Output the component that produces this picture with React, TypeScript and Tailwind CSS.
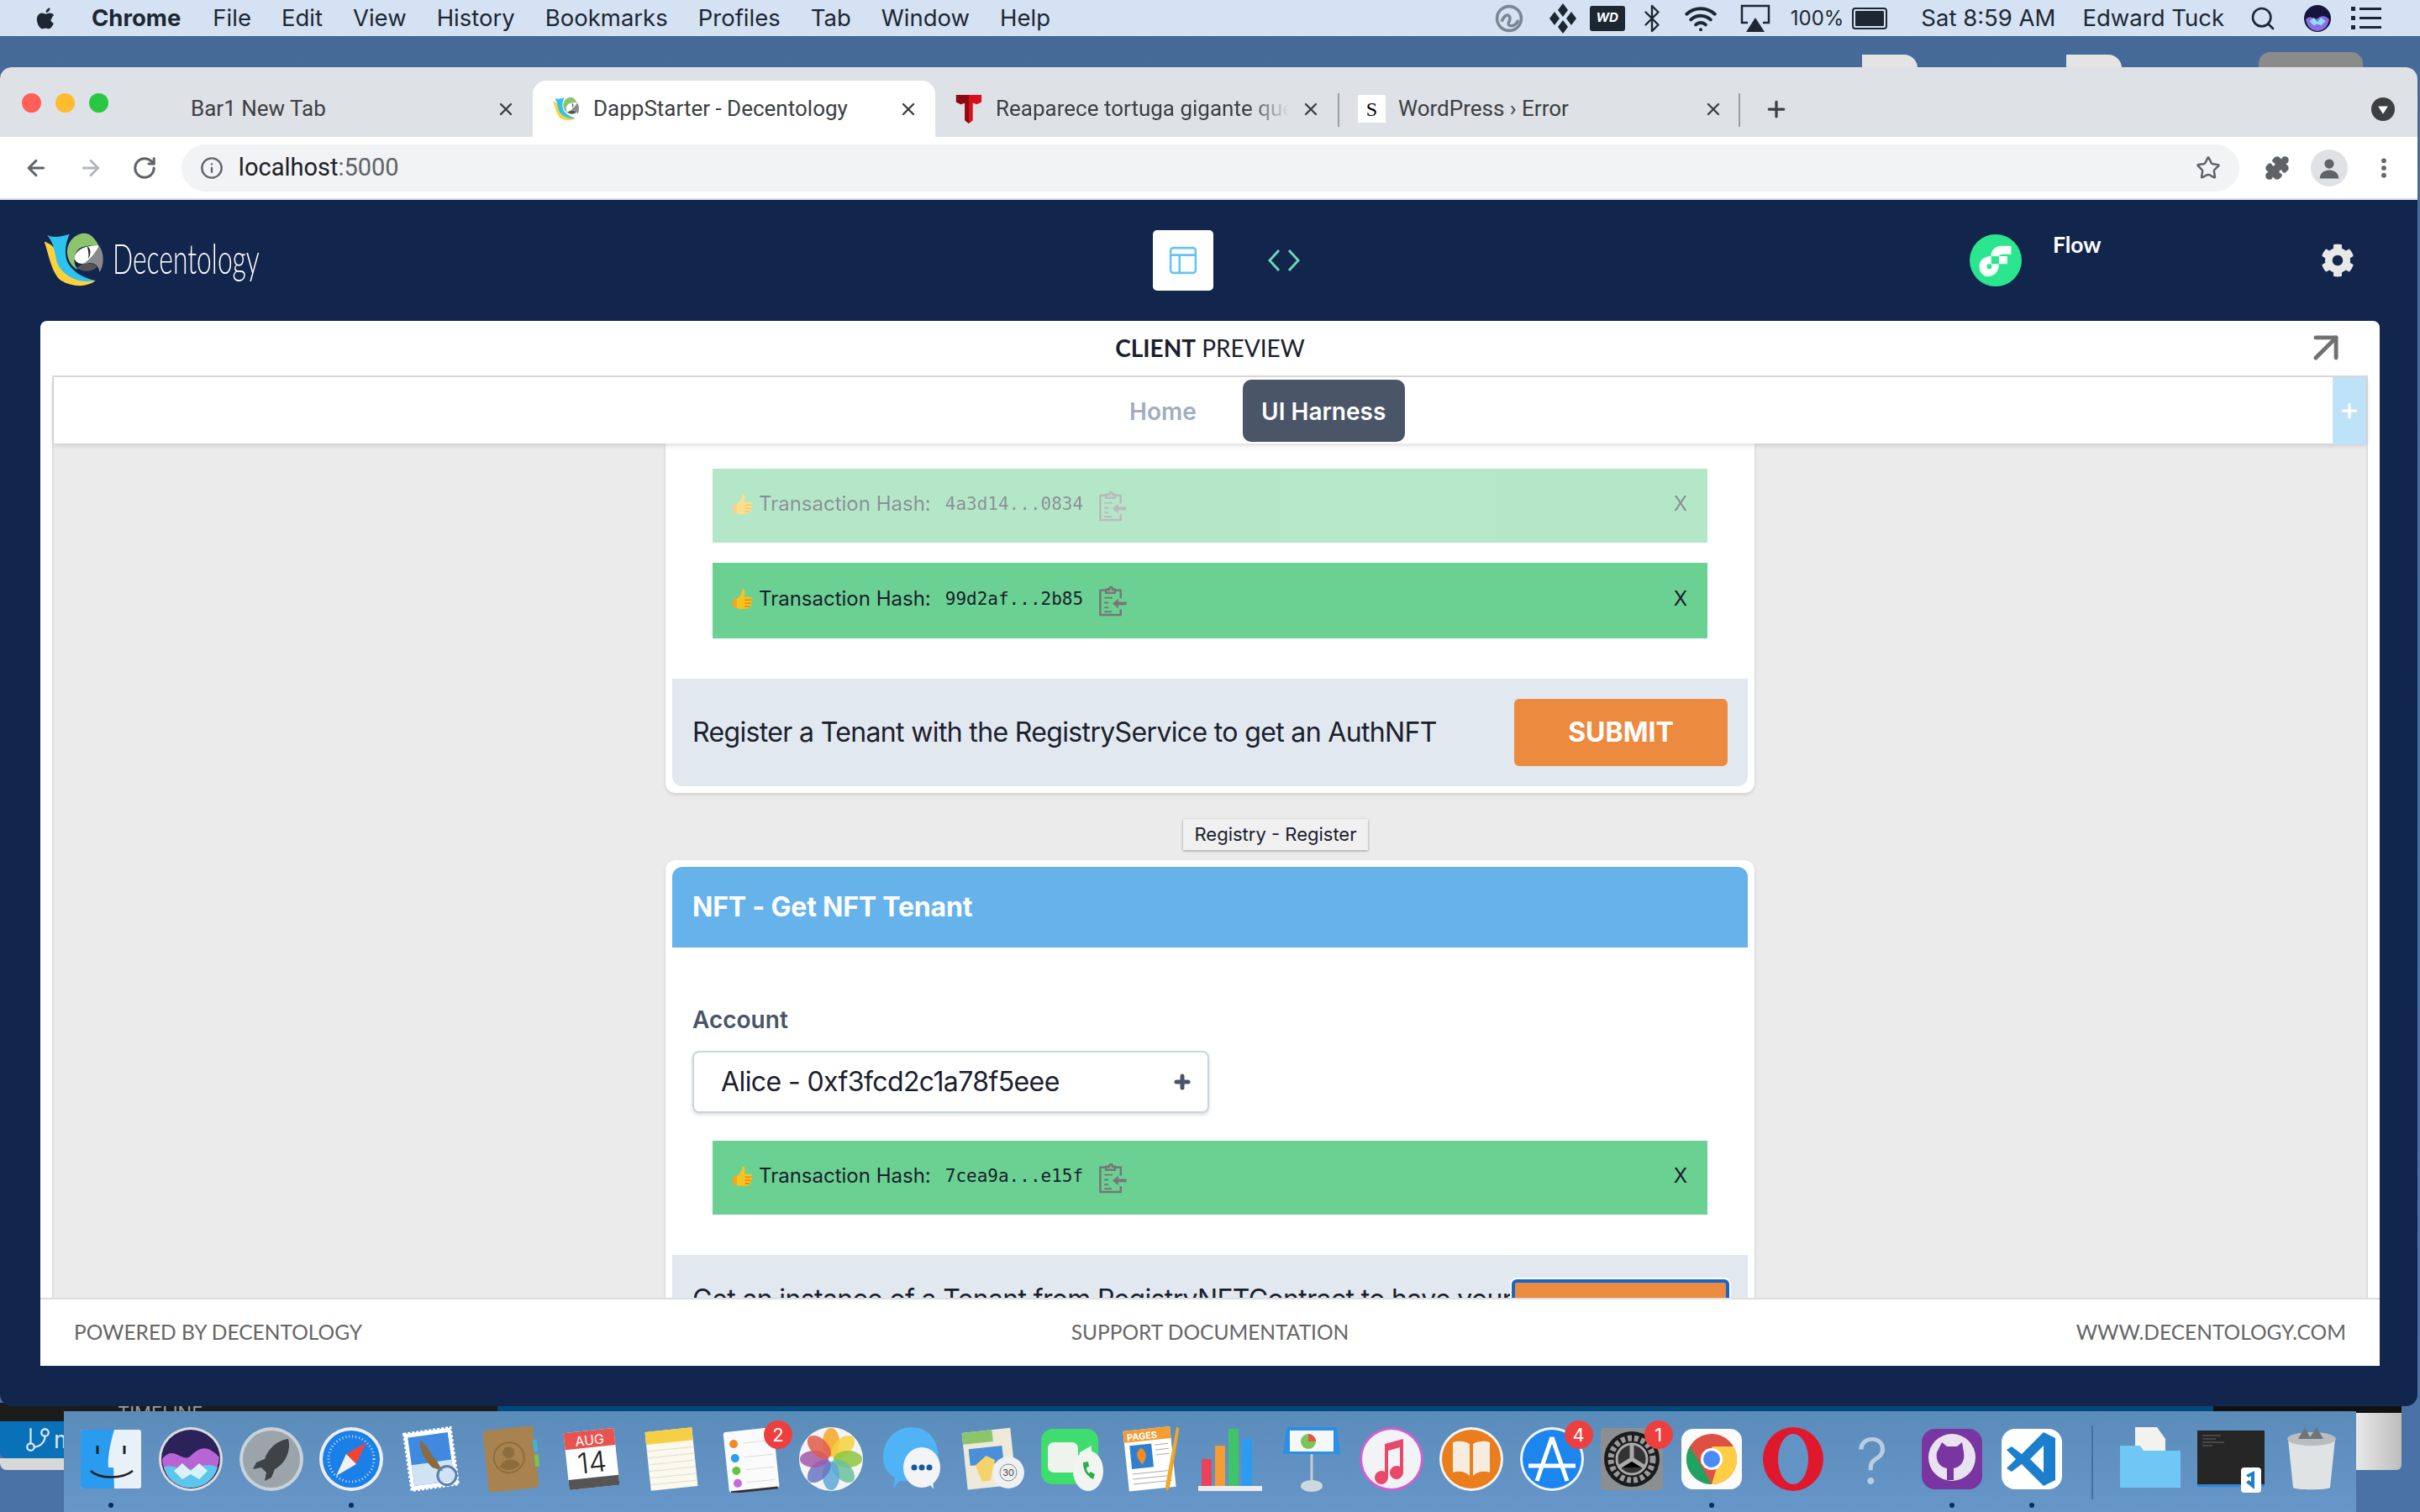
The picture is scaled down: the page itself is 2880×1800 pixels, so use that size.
import { ArrowUpRight, ArrowLeft, ArrowRight, RotateCw, Info, Star, Puzzle, MoreVertical, Plus, X, Search, Bluetooth, Wifi, GitBranch } from "lucide-react";
import { FaCog } from "react-icons/fa";
import type { ReactNode } from "react";

const leftMenu = ["File", "Edit", "View", "History", "Bookmarks", "Profiles", "Tab", "Window", "Help"];

const Parrot = ({ className }: { className: string }) => (
	<svg viewBox="66 50 224 202" className={className}>
		<path d="M68 82C90 90 108 100 112 130C120 180 170 225 255 225C225 250 170 250 130 225C95 200 85 130 68 82Z" fill="#fdd13a" />
		<path d="M78 58C100 70 130 65 160 55C150 80 140 110 150 150C165 190 210 215 255 225C200 235 140 215 115 160C105 115 100 80 78 58Z" fill="#2cc3f0" />
		<path d="M215 52C180 52 150 85 152 125C155 155 170 175 190 185C170 160 175 120 200 105C225 95 250 95 268 100C255 70 235 52 215 52Z" fill="#8fc46f" />
		<path d="M178 145C180 115 215 95 268 97C260 125 245 140 230 155C215 165 190 170 178 145Z" fill="#fff" />
		<path d="M225 100C237 105 242 125 228 145C233 125 228 115 225 100Z" fill="#222" />
		<path d="M268 97C285 120 290 160 270 195C268 175 260 165 240 160C215 160 200 175 185 178C215 165 250 135 268 97Z" fill="#8a8a8a" />
		<path d="M185 178C205 165 240 150 262 175C240 195 210 195 185 178Z" fill="#555" />
	</svg>
);

const Thumb = () => (
	<svg viewBox="1 1 22 22" className="h-[26px] w-[26px] shrink-0">
		<path d="M2 12h4v9H2z" fill="#f5a623" />
		<path d="M6 12c3-2 5-5 5.500-10 2.500 0 3.500 3 2 8h6c2 0 2 3 1 3.500 1 .5 1 3-.5 3.500.5 1 0 3-1.500 3.200 0 1-1 1.800-2 1.800H10c-2 0-4-1-4-1z" fill="#fcc21b" />
		<path d="M14 13h7M14 16.500h6.500M14 19.500h5" stroke="#e48c15" strokeWidth="1.300" />
	</svg>
);

const ClipIcon = () => (
	<svg viewBox="0 0 34 38" className="h-[37px] w-[34px] shrink-0" fill="none" stroke="#777" strokeWidth="2.600">
		<path d="M9 6H2v30h25v-7M27 16V6h-7" />
		<path d="M9 9V5h4c0-4 4-4 4 0h3v4z" />
		<path d="M7 15h10M7 21h5M7 27h5M7 32h9" strokeWidth="2" />
		<path d="M34 22H21" strokeWidth="4" />
		<path d="M24 16l-7 6 7 6z" fill="#777" stroke="none" />
	</svg>
);

const HashAlert = ({ hash, faded, height }: { hash: string; faded?: boolean; height: string }) => (
	<div className={`mx-[48px] flex items-center justify-between bg-[#6bd193] pb-[5px] pl-[23px] pr-[24px] text-[24px] text-[#1a202c] ${height} ${faded ? "opacity-50" : ""}`}>
		<div className="flex items-center">
			<Thumb />
			<span className="ml-[6px]">Transaction Hash:</span>
			<span className="ml-[17px] pt-[2px] font-['DejaVu_Sans_Mono',monospace] text-[21px]">{hash}</span>
			<span className="ml-[18px] pt-[6px]"><ClipIcon /></span>
		</div>
		<span>X</span>
	</div>
);

const Tab = ({ icon, label, active, fade }: { icon?: ReactNode; label: string; active?: boolean; fade?: boolean }) => (
	<div className={`flex h-[67px] w-[479px] shrink-0 items-center pl-[24px] pr-[20px] font-[Roboto,sans-serif] text-[26px] text-[#3c4043] ${active ? "rounded-t-[16px] bg-white" : ""}`}>
		<div className="flex w-[36px] shrink-0 items-center">{icon}</div>
		<span className={`ml-[12px] min-w-0 flex-1 overflow-hidden whitespace-nowrap ${fade ? "[mask-image:linear-gradient(to_left,transparent,black_50px)]" : ""}`}>{label}</span>
		<X size={24} strokeWidth={2.4} className="ml-[14px] shrink-0 text-[#3c4043]" />
	</div>
);

const Badge = ({ n }: { n: number }) => (
	<span className="absolute -right-[9px] -top-[6px] flex h-[34px] w-[34px] items-center justify-center rounded-full bg-[#ee3f3f] font-[Inter,sans-serif] text-[22px] text-white">{n}</span>
);

const DockIcon = ({ children, badge, running }: { children: ReactNode; badge?: number; running?: boolean }) => (
	<div className="flex w-[80px] shrink-0 flex-col items-center">
		<div className="relative h-[80px] w-[80px]">
			{children}
			{badge ? <Badge n={badge} /> : null}
		</div>
		<span className={`mt-[12px] h-[6px] w-[6px] rounded-full ${running ? "bg-[#0b2a5e]" : ""}`} />
	</div>
);

const Svg = ({ children }: { children: ReactNode }) => <svg viewBox="0 0 80 80" className="h-[80px] w-[80px]">{children}</svg>;

const dockApps: { key: string; badge?: number; running?: boolean; art: ReactNode }[] = [
	{ key: "finder", running: true, art: <><rect x="4" y="5" width="72" height="70" rx="3" fill="#e8f1f8" /><path d="M7 5h37c-6 20-8 35-7 45h6l1 25H7a3 3 0 0 1-3-3V8a3 3 0 0 1 3-3z" fill="#2a9cf0" /><path d="M16 54c10 10 38 10 50 0" stroke="#222" strokeWidth="2.500" fill="none" /><path d="M24 24v10M56 24v10" stroke="#222" strokeWidth="3" /></> },
	{ key: "siri", art: <><circle cx="40" cy="40" r="38" fill="#ddd" /><circle cx="40" cy="40" r="35" fill="#2a2258" /><path d="M6 40c14-18 24 6 34-4s20-14 34 2c-2 22-16 36-34 36S8 62 6 40z" fill="#b964d4" /><path d="M8 50c10-6 22 6 32 2s22-8 32-2c-4 14-16 24-32 24S12 64 8 50z" fill="#5ec6ec" /><path d="M20 54l10-9 10 9 10-9 10 9-10 10-10-6-10 6z" fill="#d8f2fb" /></> },
	{ key: "launchpad", art: <><circle cx="40" cy="40" r="38" fill="#c9d2d8" /><circle cx="40" cy="40" r="34" fill="#9aa4aa" /><path d="M60 16c-14 2-24 12-28 24l-10 4-4 8 10-2 6 6-2 10 8-4 4-10c12-6 20-22 16-36z" fill="#3e4347" /></> },
	{ key: "safari", running: true, art: <><circle cx="40" cy="40" r="38" fill="#eee" /><circle cx="40" cy="40" r="34" fill="#1b7fe8" /><circle cx="40" cy="40" r="27" fill="none" stroke="#cfe6fb" strokeWidth="3" strokeDasharray="1 3" /><path d="M58 20L34 34l12 12z" fill="#f04438" /><path d="M22 60l12-26 12 12z" fill="#f2f2f2" /></> },
	{ key: "mail", art: <g transform="rotate(-8 40 40)"><rect x="12" y="6" width="56" height="68" fill="#fff" stroke="#fff" strokeWidth="3" strokeDasharray="3 2" /><rect x="16" y="11" width="48" height="58" fill="#3f8ade" /><path d="M16 44h48v25H16z" fill="#cfe3f4" /><path d="M30 16c8 6 10 18 16 26l6 14-12-6c-8-10-12-22-10-34z" fill="#8b6a3e" /><circle cx="56" cy="62" r="11" fill="none" stroke="#5a80ac" strokeWidth="3" /></g> },
	{ key: "contacts", art: <g transform="rotate(-6 40 40)"><rect x="10" y="3" width="60" height="74" rx="4" fill="#a8834f" /><rect x="68" y="20" width="5" height="14" fill="#3fb4d8" /><rect x="68" y="38" width="5" height="14" fill="#7bc24f" /><circle cx="38" cy="38" r="18" fill="none" stroke="#8d6c3e" strokeWidth="2" /><circle cx="38" cy="32" r="7" fill="#8d6c3e" /><path d="M26 48c4-10 20-10 24 0-6 6-18 6-24 0z" fill="#8d6c3e" /></g> },
	{ key: "calendar", art: <g transform="rotate(-6 40 40)"><rect x="10" y="6" width="60" height="68" fill="#fff" /><path d="M10 6h60v20H10z" fill="#e8534f" /><path d="M10 62h60v12H10z" fill="#555" /><text x="40" y="23" textAnchor="middle" fontSize="16" fill="#fff" fontFamily="Inter">AUG</text><text x="40" y="56" textAnchor="middle" fontSize="34" fill="#222" fontFamily="Inter" fontWeight="300">14</text></g> },
	{ key: "notes", art: <g transform="rotate(-6 40 40)"><rect x="12" y="5" width="56" height="70" fill="#fbf8ec" /><path d="M12 5h56v15H12z" fill="#f7cf45" /><path d="M12 28h56M12 36h56M12 44h56M12 52h56M12 60h56M12 68h56" stroke="#ddd" /></g> },
	{ key: "reminders", badge: 2, art: <g transform="rotate(-6 40 40)"><rect x="10" y="5" width="60" height="72" rx="3" fill="#fbfbfb" /><path d="M12 77h56" stroke="#333" strokeWidth="3" /><circle cx="21" cy="20" r="5" fill="#f08a24" /><circle cx="21" cy="37" r="5" fill="#2a9df4" /><circle cx="21" cy="52" r="5" fill="#5cc83c" /><circle cx="21" cy="67" r="5" fill="#c867e0" /><path d="M32 20h34M32 37h34M32 52h34M32 67h34" stroke="#ddd" /></g> },
	{ key: "photos", art: <><circle cx="40" cy="40" r="38" fill="#f4f4f4" />{["#f6a623", "#f2d43b", "#8dc63f", "#6bbf9c", "#5aa8d8", "#6a74c0", "#a15ba8", "#e05a4a"].map((c, i) => <ellipse key={c} cx="40" cy="20" rx="10" ry="17" fill={c} opacity="0.85" transform={`rotate(${i * 45} 40 40)`} />)}</> },
	{ key: "messages", art: <><path d="M40 2c18 0 32 14 32 36S58 66 40 66l-14 0-8 8 2-12C10 56 6 48 6 38 6 16 22 2 40 2z" fill="#4fb3f6" /><ellipse cx="52" cy="50" rx="22" ry="24" fill="#f2f4f6" /><path d="M60 68l6 8-1-11z" fill="#f2f4f6" /><circle cx="43" cy="50" r="3.500" fill="#155a9c" /><circle cx="52" cy="50" r="3.500" fill="#155a9c" /><circle cx="61" cy="50" r="3.500" fill="#155a9c" /></> },
	{ key: "maps", art: <><g transform="rotate(-6 34 40)"><rect x="8" y="6" width="58" height="68" fill="#efe9da" /><path d="M8 6h36v14H8z" fill="#8cc46c" /><path d="M14 26h40v20H14z" fill="#4a8fd8" /><path d="M20 46l14-10 10 6-8 24-10 0z" fill="#f5d36a" /></g><circle cx="60" cy="56" r="19" fill="#eef0f2" /><circle cx="60" cy="56" r="10" fill="none" stroke="#888" /><text x="60" y="60" textAnchor="middle" fontSize="11" fill="#444" fontFamily="Inter">30</text></> },
	{ key: "facetime", art: <><rect x="4" y="4" width="68" height="66" rx="14" fill="#3fdc6e" /><rect x="12" y="20" width="36" height="36" rx="7" fill="#eef3ee" /><path d="M50 32l14-8v28l-14-8z" fill="#eef3ee" /><ellipse cx="60" cy="54" rx="18" ry="24" fill="#f2f4f2" /><path d="M54 44c0 10 4 16 12 20l2-6-5-3-2 2c-2-2-3-4-3-7l3-1-1-6z" fill="#28b04a" /></> },
	{ key: "pages", art: <><g transform="rotate(-6 36 40)"><rect x="10" y="4" width="56" height="72" fill="#fff" /><path d="M10 4h56v14H10z" fill="#f59c33" /><text x="14" y="16" fontSize="11" fill="#fff" fontFamily="Inter" fontWeight="700">PAGES</text><rect x="16" y="22" width="26" height="28" fill="#2f7fd0" /><path d="M29 26c6 4 8 10 0 20-8-10-6-16 0-20z" fill="#f58a1f" /><path d="M46 24h16M46 30h16M46 36h16M16 56h46M16 62h46M16 68h46" stroke="#aaa" /></g><path d="M70 2c2 0 4 1 3 4L62 74l-4 4-1-6z" fill="#f5a623" /></> },
	{ key: "numbers", art: <><path d="M0 72h76v6H0z" fill="#eee" /><rect x="4" y="40" width="12" height="32" fill="#e8425c" /><rect x="20" y="24" width="12" height="48" fill="#f59c33" /><rect x="36" y="4" width="12" height="68" fill="#3fc46a" /><rect x="52" y="16" width="12" height="56" fill="#2c9bf0" /></> },
	{ key: "keynote", art: <><path d="M10 2h60l4 32H6z" fill="#2b8fe8" /><rect x="14" y="6" width="52" height="25" fill="#f5f7f9" /><circle cx="36" cy="19" r="9" fill="#7cc45a" /><path d="M36 19V10a9 9 0 0 1 9 9z" fill="#e8544a" /><rect x="38.500" y="34" width="3" height="36" fill="#c5ccd2" /><ellipse cx="40" cy="72" rx="13" ry="7" fill="#cfd8df" /></> },
	{ key: "itunes", art: <><circle cx="40" cy="40" r="38" fill="#cf5fd0" /><circle cx="40" cy="40" r="35" fill="#f2f3f7" /><path d="M32 22l22-6v40a8 8 0 1 1-4-7V26l-14 4v32a8 8 0 1 1-4-7z" fill="#e8486a" /></> },
	{ key: "books", art: <><circle cx="40" cy="40" r="38" fill="#f4f4f4" /><circle cx="40" cy="40" r="35" fill="#ea7d1c" /><path d="M38 22c-6-4-14-4-20-2v36c6-2 14-2 20 4zM42 22c6-4 14-4 20-2v36c-6-2-14-2-20 4z" fill="#f6ecdf" /></> },
	{ key: "appstore", badge: 4, art: <><circle cx="40" cy="40" r="38" fill="#f0f4f8" /><circle cx="40" cy="40" r="35" fill="#1c86ee" /><path d="M40 14L22 66M40 14L58 66M12 48h56" stroke="#fff" strokeWidth="5" fill="none" /></> },
	{ key: "prefs", badge: 1, art: <><rect x="3" y="3" width="74" height="74" rx="4" fill="#8b8f92" /><circle cx="40" cy="40" r="33" fill="#1b1b1b" /><circle cx="40" cy="40" r="25" fill="none" stroke="#9a9a9a" strokeWidth="7" strokeDasharray="5 3" /><circle cx="40" cy="40" r="18" fill="#333" stroke="#aaa" strokeWidth="3" /><path d="M40 22v18M24 50l16-10 16 10" stroke="#aaa" strokeWidth="5" /></> },
	{ key: "chrome", running: true, art: <><rect x="4" y="4" width="72" height="72" rx="14" fill="#fbfbfb" /><circle cx="40" cy="40" r="30" fill="#dd5144" /><path d="M40 70a30 30 0 0 1-26-45l13 22z" fill="#1da462" /><path d="M40 70a30 30 0 0 0 26-45H40l7 22z" fill="#ffcd46" /><circle cx="40" cy="40" r="13" fill="#fff" /><circle cx="40" cy="40" r="10" fill="#4c8bf5" /></> },
	{ key: "opera", art: <><ellipse cx="42" cy="40" rx="36" ry="38" fill="#e0182d" /><ellipse cx="42" cy="40" rx="18" ry="30" fill="#6394c6" /></> },
	{ key: "unknown", art: <text x="40" y="70" textAnchor="middle" fontSize="76" fill="#b9cde0" fontFamily="Inter" fontWeight="300">?</text> },
	{ key: "github", running: true, art: <><rect x="4" y="4" width="72" height="72" rx="16" fill="#7a36a0" /><circle cx="40" cy="38" r="28" fill="#e9e2f0" /><path d="M28 20l6 5h12l6-5 2 12c2 10-4 18-12 19v14h-8V51c-8-1-14-9-12-19z" fill="#7a36a0" /></> },
	{ key: "vscode", running: true, art: <><rect x="4" y="4" width="72" height="72" rx="16" fill="#fff" /><path d="M54 8l14 7v50l-14 7-26-26-12 9-6-4 11-11-11-11 6-4 12 9zM54 24L38 40l16 16z" fill="#1b7fce" /></> },
];

const Dock = () => (
	<div className="absolute bottom-0 left-[76px] flex h-[120px] w-[2728px] items-start bg-gradient-to-b from-[#5a8cba] to-[#6796c8] pl-[16px] pt-[17px]">
		<div className="flex gap-[15.25px]">
			{dockApps.map((app) => (
				<DockIcon key={app.key} badge={app.badge} running={app.running}>
					<Svg>{app.art}</Svg>
				</DockIcon>
			))}
		</div>
		<div className="ml-[31px] mr-[28px] h-[88px] w-[2px] bg-[#46709f]" />
		<div className="flex gap-[16px]">
			<DockIcon>
				<Svg><path d="M22 2h26l10 14v20H22z" fill="#f2f2ee" /><path d="M4 24h24l4 6h44v44H4z" fill="#70c7f5" /></Svg>
			</DockIcon>
			<DockIcon>
				<Svg>
					<rect x="0" y="6" width="80" height="66" fill="#262626" />
					<path d="M0 70h80v3H0z" fill="#2b88d8" />
					<path d="M6 12h22M6 16h16M6 20h26M6 24h12" stroke="#666" />
					<rect x="52" y="50" width="24" height="30" rx="4" fill="#fff" />
					<path d="M68 54v22l-10-8 3-3 3 2V60l-3 2-3-3z" fill="#1b7fce" />
				</Svg>
			</DockIcon>
			<DockIcon>
				<Svg><path d="M12 16h56l-6 58c-2 3-42 3-44 0z" fill="#dfe3e4" /><ellipse cx="40" cy="16" rx="29" ry="8" fill="#b9bdc0" /><path d="M24 16l8-14 6 12 8-12 8 14z" fill="#70757a" /></Svg>
			</DockIcon>
		</div>
	</div>
);

const BehindDesktop = () => (
	<>
		<div className="absolute left-[2216px] top-[65px] h-[16px] w-[66px] rounded-tr-[16px] bg-[#e4e4e4]" />
		<div className="absolute left-[2459px] top-[65px] h-[16px] w-[66px] rounded-tr-[16px] bg-[#e4e4e4]" />
		<div className="absolute left-[2688px] top-[62px] h-[20px] w-[124px] rounded-t-[14px] bg-[#8b8b8b]" />
		<div className="absolute left-[96px] top-[1670px] h-[12px] w-[496px] overflow-hidden bg-[#1a1a1a] pl-[44px] text-[22px] leading-[24px] text-[#9a9a9a]">TIMELINE</div>
		<div className="absolute left-[592px] top-[1670px] h-[12px] w-[2042px] bg-[#00497a]" />
		<div className="absolute left-[2634px] top-[1670px] h-[12px] w-[224px] bg-[#111]" />
		<div className="absolute left-0 top-[1670px] h-[22px] w-[96px] bg-[#1c1c1c]" />
		<div className="absolute left-0 top-[1692px] flex h-[44px] w-[76px] items-center overflow-hidden rounded-bl-[8px] bg-[#0a70b8] pl-[28px] text-[28px] text-[#d8e8f4]">
			<GitBranch size={34} strokeWidth={1.6} className="shrink-0" />
			<span className="ml-[2px]">m</span>
		</div>
		<div className="absolute left-0 top-[1736px] h-[14px] w-[76px] rounded-bl-[8px] bg-[#d8d8d8]" />
		<div className="absolute left-[2804px] top-[1682px] h-[68px] w-[54px] rounded-br-[6px] bg-gradient-to-r from-[#e8e8e8] to-[#bdbdbd]" />
	</>
);

const MenuBar = () => (
	<div className="flex h-[44px] items-center justify-between border-b border-[#3f5f8a] bg-[#d4e2f3] pl-[43px] pr-[46px] font-[Inter,sans-serif] text-[27.5px] text-[#1d2733]">
		<div className="flex items-center">
			<svg viewBox="0 0 24 28" className="h-[32px] w-[26px]" fill="#1d2733">
				<path d="M17 15c0-3 2.500-4.400 2.600-4.500C18.200 8.400 16 8.100 15.200 8c-1.900-.2-3.700 1.100-4.700 1.100S8 8 6.500 8C4.500 8 2.700 9.200 1.700 11c-2 3.500-.5 8.700 1.400 11.500 1 1.400 2.100 3 3.600 2.900 1.400-.1 2-.9 3.700-.9s2.200.9 3.700.9 2.500-1.400 3.500-2.800c1.100-1.600 1.500-3.200 1.600-3.300-.1 0-3.200-1.200-3.200-4.300z" />
				<path d="M14 6c.8-1 1.300-2.300 1.200-3.700-1.100 0-2.500.8-3.300 1.800-.7.800-1.400 2.200-1.200 3.500 1.300.1 2.500-.6 3.300-1.600z" />
			</svg>
			<span className="ml-[40px] font-bold">Chrome</span>
			<div className="ml-[38px] flex gap-[36px]">
				{leftMenu.map((item) => <span key={item}>{item}</span>)}
			</div>
		</div>
		<div className="flex items-center">
			<svg viewBox="0 0 40 40" className="h-[36px] w-[36px]" fill="none" stroke="#7b8794" strokeWidth="4">
				<circle cx="20" cy="20" r="16" /><path d="M10 24c6-14 14-8 10 0s8 8 12-2" />
			</svg>
			<svg viewBox="0 0 36 36" className="ml-[28px] h-[36px] w-[36px]" fill="#1d2733">
				<path d="M18 0l6 8-6 8-6-8zM8 10l6 8-6 8-6-8zM28 10l6 8-6 8-6-8zM18 20l6 8-6 8-6-8z" />
			</svg>
			<span className="ml-[14px] flex h-[30px] w-[42px] items-center justify-center rounded-[3px] bg-[#1d2733] text-[15px] font-bold italic text-white">WD</span>
			<Bluetooth size={36} strokeWidth={1.6} className="ml-[14px]" />
			<Wifi size={40} strokeWidth={2.4} className="ml-[20px]" />
			<svg viewBox="0 0 36 34" className="ml-[27px] h-[34px] w-[36px]" fill="none" stroke="#1d2733" strokeWidth="2.500">
				<path d="M9 22H2V2h32v20h-7" /><path d="M18 16l11 17H7z" fill="#1d2733" stroke="none" />
			</svg>
			<span className="ml-[24px] text-[24px]">100%</span>
			<span className="ml-[10px] flex h-[26px] w-[42px] items-center rounded-[4px] border-2 border-[#1d2733] p-[2px]"><span className="h-full w-full rounded-[1px] bg-[#1d2733]" /></span>
			<span className="ml-[40px]">Sat 8:59 AM</span>
			<span className="ml-[32px]">Edward Tuck</span>
			<Search size={32} strokeWidth={2} className="ml-[30px]" />
			<svg viewBox="0 0 30 30" className="ml-[33px] h-[32px] w-[32px]">
				<circle cx="15" cy="15" r="15" fill="#14143c" /><path d="M2 16c6-6 9 2 13-1s8-4 13 1c-1 8-7 13-13 13S3 24 2 16z" fill="#8b6fe0" /><path d="M6 18l5-4 4 5 4-5 5 4-5 5-4-2-4 2z" fill="#8fdcf8" />
			</svg>
			<svg viewBox="0 0 36 30" className="ml-[24px] h-[30px] w-[36px]" fill="#1d2733">
				<path d="M0 1h5v5H0zM10 2h26v3H10zM0 12h5v5H0zM10 13h26v3H10zM0 23h5v5H0zM10 24h26v3H10z" />
			</svg>
		</div>
	</div>
);

const BrowserChrome = () => (
	<>
		<div className="flex h-[83px] items-end rounded-t-[14px] bg-[#dee1e6]">
			<div className="flex h-[67px] w-[155px] shrink-0 items-start gap-[17px] pl-[26px] pt-[15px]">
				<span className="h-[23px] w-[23px] rounded-full bg-[#ff5f57]" />
				<span className="h-[23px] w-[23px] rounded-full bg-[#febc2e]" />
				<span className="h-[23px] w-[23px] rounded-full bg-[#28c840]" />
			</div>
			<Tab label="Bar1 New Tab" />
			<Tab
				active
				label="DappStarter - Decentology"
				icon={<Parrot className="h-[34px] w-[32px]" />}
			/>
			<Tab
				fade
				label="Reaparece tortuga gigante que"
				icon={
					<svg viewBox="0 0 32 36" className="h-[34px] w-[32px]">
						<path d="M0 0h32v9l-6 3-5-2v22l-5 4-5-4V10L6 12 0 9z" fill="#d8101c" />
						<path d="M0 0h16v36l-5-4V10L6 12 0 9z" fill="#8c0a12" />
					</svg>
				}
			/>
			<div className="relative flex">
				<span className="absolute bottom-[12px] left-0 h-[40px] w-[2px] bg-[#9aa0a6]" />
				<Tab
					label="WordPress › Error"
					icon={<span className="flex h-[33px] w-[33px] items-center justify-center bg-white font-['Liberation_Serif',serif] text-[24px] text-black">S</span>}
				/>
				<span className="absolute bottom-[12px] right-0 h-[40px] w-[2px] bg-[#9aa0a6]" />
			</div>
			<div className="flex h-[67px] flex-1 items-center justify-between pl-[28px] pr-[27px]">
				<Plus size={30} strokeWidth={2.6} className="text-[#3c4043]" />
				<span className="flex h-[28px] w-[28px] items-center justify-center rounded-full bg-[#3c4043]">
					<svg viewBox="0 0 12 12" className="h-[14px] w-[14px]" fill="#fff"><path d="M1 3h10L6 11z" /></svg>
				</span>
			</div>
		</div>
		<div className="flex h-[75px] items-center border-b-2 border-[#dfe1e5] bg-white pl-[28px] pr-[25px] text-[#5f6368]">
			<ArrowLeft size={30} strokeWidth={2.4} />
			<ArrowRight size={30} strokeWidth={2.4} className="ml-[35px] text-[#b4b7ba]" />
			<RotateCw size={30} strokeWidth={2.4} className="ml-[34px]" />
			<div className="ml-[29px] flex h-[56px] w-[2453px] items-center rounded-full bg-[#f1f3f4] pl-[22px] pr-[22px]">
				<Info size={28} strokeWidth={2} />
				<span className="ml-[18px] font-[Roboto,sans-serif] text-[29px] text-[#202124]">localhost<span className="text-[#5f6368]">:5000</span></span>
				<Star size={30} strokeWidth={2} className="ml-auto" />
			</div>
			<Puzzle size={30} fill="#5f6368" className="ml-[30px]" />
			<span className="ml-[25px] flex h-[44px] w-[44px] items-center justify-center rounded-full bg-[#dfe1e5]">
				<svg viewBox="0 0 24 24" className="h-[30px] w-[30px]" fill="#5f6368"><circle cx="12" cy="8" r="4.500" /><path d="M3 22c0-5 4-8 9-8s9 3 9 8z" /></svg>
			</span>
			<MoreVertical size={30} strokeWidth={2.6} className="ml-[28px]" />
		</div>
	</>
);

const AppHeader = () => (
	<div className="flex h-[144px] items-center pl-[52px] pr-[75px]">
		<div className="flex w-[1320px] items-center">
			<Parrot className="h-[66px] w-[73px]" />
			<span className="ml-[9px] origin-left scale-x-[0.65] pb-[5px] font-[Lato,sans-serif] text-[49px] font-light text-white">Decentology</span>
		</div>
		<span className="flex h-[72px] w-[72px] items-center justify-center rounded-[5px] bg-white">
			<svg viewBox="0 0 32 32" className="h-[34px] w-[34px]" fill="none" stroke="#63c5ef" strokeWidth="2.400">
				<rect x="2" y="2" width="28" height="28" rx="3" /><path d="M2 10h28M12 10v20" />
			</svg>
		</span>
		<svg viewBox="0 0 38 28" className="ml-[65px] h-[28px] w-[38px]" fill="none" stroke="#6fd3b5" strokeWidth="3">
			<path d="M13 2L2 14l11 12M25 2l11 12-11 12" />
		</svg>
		<div className="ml-[797px] flex h-[62px] w-[62px] items-center justify-center rounded-full bg-[#2ae68e]">
			<svg viewBox="68 55 188 188" className="h-[62px] w-[62px]">
				<path d="M218 97V127H188C180 127 174 130 174 134H204V162H174V165C174 190 155 207 135 207C115 207 103 190 103 170C103 148 120 135 145 133C145 115 160 97 182 97Z" fill="#fff" />
				<rect x="146" y="134" width="28" height="28" fill="#2ae68e" />
				<circle cx="139" cy="171" r="9" fill="#2ae68e" />
			</svg>
		</div>
		<span className="ml-[37px] self-start pt-[35px] font-[Lato,sans-serif] text-[26.5px] font-bold leading-[36px] text-white">Flow</span>
		<FaCog size={40} className="ml-auto text-[#e8e8e8]" />
	</div>
);

const SiteFooter = () => (
	<div className="grid h-[81px] grid-cols-3 items-center border-t-2 border-[#dddddd] bg-white px-[40px] font-[Lato,sans-serif] text-[24.5px] uppercase text-[#666666]">
		<span>Powered by Decentology</span>
		<span className="text-center">Support Documentation</span>
		<span className="text-right">www.decentology.com</span>
	</div>
);

const PreviewNav = () => (
	<div className="relative z-10 flex h-[79px] items-start bg-white pl-[1280px] pt-[3px] font-semibold shadow-[0_2px_6px_rgba(0,0,0,0.15)]">
		<div className="flex items-center gap-[55px]">
			<span className="pt-[2px] text-[28px] text-[#a0aec0]">Home</span>
			<span className="flex h-[74px] w-[193px] items-center justify-center rounded-[10px] bg-[#4a5568] pt-[2px] text-[28px] text-white">UI Harness</span>
		</div>
		<div className="absolute right-0 top-0 flex h-[80px] w-[40px] items-center justify-center bg-[#bee3f8]">
			<Plus size={26} strokeWidth={3} className="text-white" />
		</div>
	</div>
);

const ScrollArea = () => (
	<div className="h-[1017px] overflow-hidden bg-[#ebebeb]">
		<div className="ml-[728px] w-[1296px] rounded-b-[12px] bg-white px-[8px] pb-[8px] pt-[30px] shadow-[0_2px_4px_rgba(0,0,0,0.12)]">
			<div className="flex flex-col gap-[24px]">
				<HashAlert faded hash="4a3d14...0834" height="h-[88px]" />
				<HashAlert hash="99d2af...2b85" height="h-[90px]" />
			</div>
			<div className="mt-[48px] flex h-[128px] items-center justify-between rounded-b-[12px] bg-[#e2e8f0] pl-[24px] pr-[24px] text-[#1a202c]">
				<span className="text-[32px] tracking-[-0.65px]">Register a Tenant with the RegistryService to get an AuthNFT</span>
				<span className="flex h-[80px] w-[254px] items-center justify-center rounded-[6px] bg-[#ec8a40] text-[32px] font-bold text-white">SUBMIT</span>
			</div>
		</div>
		<div className="h-[80px] pl-[1344px] pt-[31px]">
			<span className="flex h-[37px] w-[220px] items-center justify-center bg-[#f0f0f0] text-[22px] text-[#1a202c] shadow-[0_1px_3px_rgba(0,0,0,0.35)]">Registry - Register</span>
		</div>
		<div className="ml-[728px] w-[1296px] rounded-[12px] bg-white p-[8px] shadow-[0_2px_4px_rgba(0,0,0,0.12)]">
			<div className="flex h-[96px] items-center rounded-t-[12px] bg-[#66b3ec] px-[24px] text-[32px] font-bold tracking-[-0.2px] text-white">NFT - Get NFT Tenant</div>
			<div className="px-[24px] pt-[66px]">
				<div className="text-[28px] font-semibold leading-[40px] text-[#4a5568]">Account</div>
				<div className="mt-[17px] flex h-[74px] w-[615px] items-center justify-between rounded-[8px] border-2 border-[#cbd5e0] bg-white pl-[32px] pr-[18px] text-[#1a202c] shadow-[0_2px_4px_rgba(0,0,0,0.15)]">
					<span className="text-[32px] tracking-[-0.6px]">Alice - 0xf3fcd2c1a78f5eee</span>
					<Plus size={24} strokeWidth={5} className="text-[#4a5568]" />
				</div>
			</div>
			<div className="mt-[33px]">
				<HashAlert hash="7cea9a...e15f" height="h-[88px]" />
			</div>
			<div className="mt-[48px] flex h-[128px] items-start justify-between bg-[#e2e8f0] pl-[24px] pr-[22px] pt-[29px] text-[#1a202c]">
				<span className="w-0 flex-1 whitespace-nowrap text-[32px] leading-[48px] tracking-[-0.65px]">Get an instance of a Tenant from RegistryNFTContract to have your</span>
				<span className="relative h-[80px] w-[259px] shrink-0 rounded-[6px] border-[4px] border-[#1466cc] bg-[#ec8a40] ring-2 ring-white" />
			</div>
		</div>
	</div>
);

const App = () => {
	return (
		<div className="relative h-[1800px] w-[2880px] overflow-hidden bg-gradient-to-b from-[#466a98] to-[#4a72a6] font-[Inter,sans-serif]">
			<MenuBar />
			<BehindDesktop />
			<div className="relative mt-[36px] h-[1594px] w-[2877px] rounded-[14px] bg-[#12264d]">
				<BrowserChrome />
				<AppHeader />
				<div className="ml-[48px] mr-[45px] rounded-t-[8px] rounded-b-[6px] bg-white">
					<div className="relative flex h-[65px] items-center justify-center pb-[2px] font-[Lato,sans-serif] text-[28px] text-[#1a202c]">
						<span><b className="font-bold">CLIENT</b> PREVIEW</span>
						<ArrowUpRight size={58} strokeWidth={2} className="absolute right-[35px] top-[3px] text-[#707070]" />
					</div>
					<div className="mx-[14px] border-x-2 border-t-2 border-[#dddddd]">
						<PreviewNav />
						<ScrollArea />
					</div>
					<SiteFooter />
				</div>
			</div>
			<Dock />
		</div>
	);
};

export default App;
